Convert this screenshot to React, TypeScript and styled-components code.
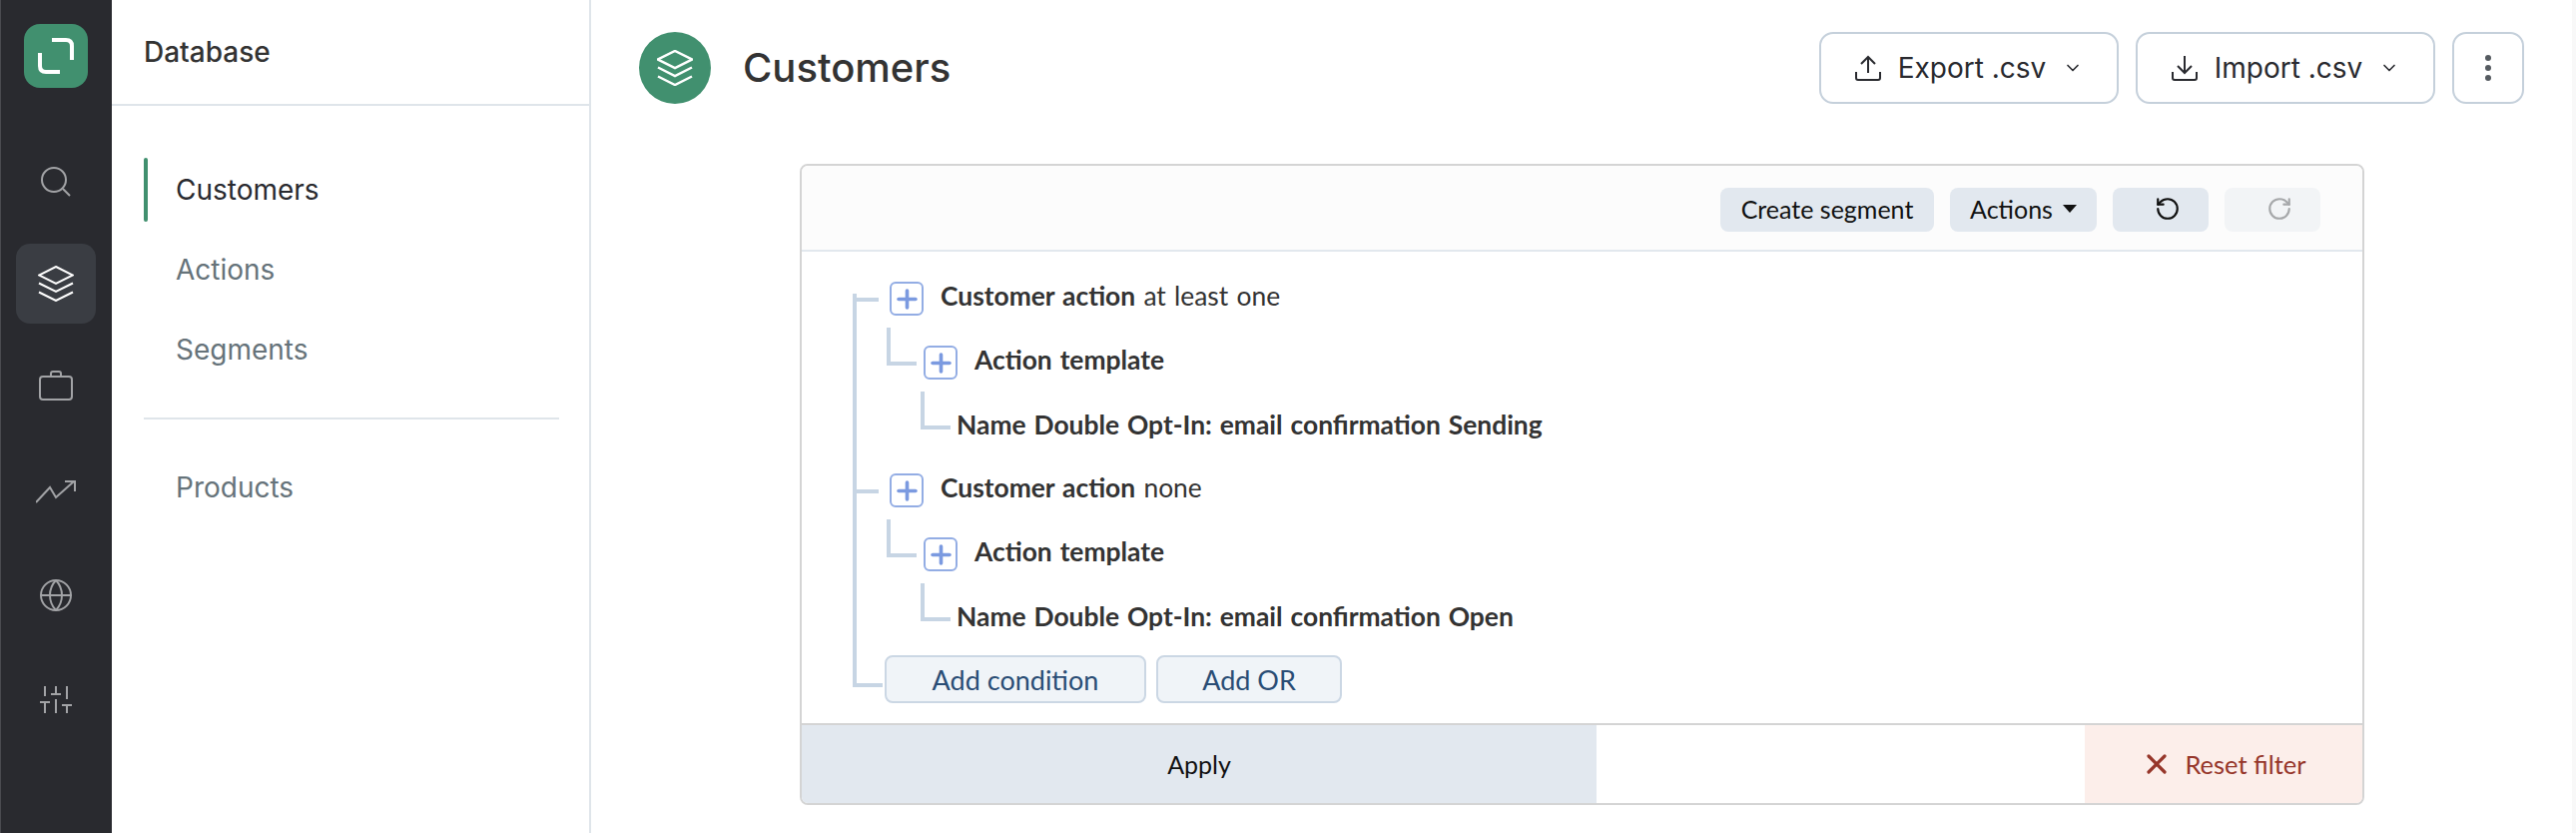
import styled, { createGlobalStyle } from 'styled-components';
import { ChevronDown, Globe, Plus, RotateCcw, RotateCw, X } from 'lucide-react';

const GlobalStyle = createGlobalStyle`
  html, body {
    margin: 0;
    padding: 0;
    background: #fff;
  }
  * {
    box-sizing: border-box;
  }
`;

const Page = styled.div`
  display: flex;
  width: 2580px;
  height: 834px;
  overflow: hidden;
  font-family: Inter, 'Liberation Sans', sans-serif;
  color: #333;
`;

const Rail = styled.aside`
  flex: 0 0 112px;
  display: flex;
  flex-direction: column;
  align-items: center;
  padding-top: 24px;
  background: #292a2f;
  box-shadow: inset 1px 0 0 #4a4b50;
`;

const Logo = styled.div`
  width: 64px;
  height: 64px;
  margin-bottom: 52px;
  border-radius: 16px;
  background: #41906f;
`;

const RailItem = styled.div<{ $active?: boolean }>`
  width: 80px;
  height: 80px;
  margin-bottom: 24px;
  display: flex;
  align-items: center;
  justify-content: center;
  border-radius: 14px;
  color: ${(p) => (p.$active ? '#fff' : '#a2a3a6')};
  background: ${(p) => (p.$active ? '#3a3d43' : 'transparent')};
`;

const SubNav = styled.nav`
  flex: 0 0 480px;
  border-right: 2px solid #dfe5ea;
`;

const SubNavHead = styled.div`
  height: 106px;
  padding: 0 32px;
  display: flex;
  align-items: center;
  font-size: 28px;
  font-weight: 500;
  color: #333;
  border-bottom: 2px solid #dfe5ea;
`;

const SubNavList = styled.div`
  padding: 44px 30px 0 32px;
  display: flex;
  flex-direction: column;
`;

const SubNavItem = styled.div<{ $active?: boolean }>`
  position: relative;
  height: 80px;
  padding-left: 32px;
  display: flex;
  align-items: center;
  font-size: 28px;
  color: ${(p) => (p.$active ? '#292a2f' : '#66737a')};
  ${(p) =>
    p.$active &&
    `&::before {
      content: '';
      position: absolute;
      left: 0;
      top: 8px;
      bottom: 8px;
      width: 4px;
      border-radius: 2px;
      background: #41906f;
    }`}
`;

const SubNavDivider = styled.div`
  height: 2px;
  margin: 28px 0;
  background: #dfe5ea;
`;

const Main = styled.main`
  flex: 1;
  min-width: 0;
  border-right: 4px solid #f8f8f8;
`;

const TopBar = styled.header`
  height: 164px;
  padding: 32px 48px 0 48px;
  display: flex;
  align-items: flex-start;
`;

const TitleIcon = styled.div`
  width: 72px;
  height: 72px;
  display: flex;
  align-items: center;
  justify-content: center;
  border-radius: 50%;
  color: #fff;
  background: #41906f;
`;

const Title = styled.h1`
  margin: 0 0 0 32px;
  flex: 1;
  line-height: 72px;
  font-size: 40px;
  font-weight: 500;
  color: #333;
`;

const TopButtons = styled.div`
  display: flex;
  gap: 17px;
`;

const TopButton = styled.div<{ $square?: boolean }>`
  height: 72px;
  width: ${(p) => (p.$square ? '72px' : '300px')};
  display: flex;
  align-items: center;
  justify-content: center;
  gap: 17px;
  font-size: 28px;
  color: #292a2f;
  background: #fff;
  border: 2px solid #c5d0db;
  border-radius: 14px;
`;

const MoreDots = styled.span`
  display: flex;
  flex-direction: column;
  gap: 4px;

  & > i {
    width: 6px;
    height: 6px;
    border-radius: 50%;
    background: #555b60;
  }
`;

const Panel = styled.section`
  width: 1567px;
  height: 642px;
  margin-left: 209px;
  display: flex;
  flex-direction: column;
  overflow: hidden;
  border: 2px solid #d4d4d4;
  border-radius: 8px;
  font-family: Lato, 'Noto Sans', sans-serif;
`;

const PanelHead = styled.div`
  height: 86px;
  padding: 22px 42px 0 0;
  display: flex;
  justify-content: flex-end;
  gap: 16px;
  background: #fcfcfc;
  border-bottom: 2px solid #e2e8ee;
`;

const HeadButton = styled.div<{ $width: number; $disabled?: boolean; $icon?: boolean }>`
  width: ${(p) => p.$width}px;
  height: 44px;
  padding: 0 0 2px ${(p) => (p.$icon ? '14px' : '0')};
  display: flex;
  align-items: center;
  justify-content: center;
  gap: 10px;
  font-size: 25px;
  color: ${(p) => (p.$disabled ? '#a6a8aa' : '#111')};
  background: ${(p) => (p.$disabled ? '#f2f4f6' : '#e2e8ef')};
  border-radius: 8px;
`;

const Caret = styled.span`
  width: 0;
  height: 0;
  border-left: 7px solid transparent;
  border-right: 7px solid transparent;
  border-top: 8px solid #111;
`;

const Tree = styled.div`
  flex: 1;
  padding-top: 15px;
  display: flex;
  flex-direction: column;
`;

const Spine = styled.div`
  position: relative;

  &::before {
    content: '';
    position: absolute;
    left: 51px;
    top: 27px;
    bottom: 22px;
    border-left: 4px solid #c7d5e4;
  }
`;

const Row = styled.div<{ $level: number }>`
  position: relative;
  height: 64px;
  margin-left: ${(p) => 51 + p.$level * 34}px;
  padding-left: 37px;
  display: flex;
  align-items: center;
  font-size: 26.4px;
  word-spacing: 1.5px;
  color: #333;

  &::before {
    content: '';
    position: absolute;
    left: 0;
    top: ${(p) => (p.$level === 0 ? '27px' : '-3px')};
    width: 26px;
    height: ${(p) => (p.$level === 0 ? '4px' : '34px')};
    border-left: ${(p) => (p.$level === 0 ? '0' : '4px solid #c7d5e4')};
    border-bottom: 4px solid #c7d5e4;
  }
`;

const AddBox = styled.span`
  flex: 0 0 34px;
  width: 34px;
  height: 34px;
  margin-right: 17px;
  display: flex;
  align-items: center;
  justify-content: center;
  color: #7b9ae0;
  border: 2px solid #93ade4;
  border-radius: 6px;
`;

const RowText = styled.span`
  margin-bottom: 6px;
`;

const Strong = styled.b`
  font-weight: 700;
`;

const LeafText = styled.span`
  margin: 0 0 4px -1px;
  font-weight: 700;
`;

const AddRow = styled.div`
  position: relative;
  margin: 5px 0 0 51px;
  padding-left: 32px;
  display: flex;
  gap: 10px;

  &::before {
    content: '';
    position: absolute;
    left: 0;
    top: 0;
    width: 26px;
    height: 28px;
    border-left: 4px solid #c7d5e4;
    border-bottom: 4px solid #c7d5e4;
  }
`;

const AddButton = styled.div<{ $width: number }>`
  width: ${(p) => p.$width}px;
  height: 48px;
  display: flex;
  align-items: center;
  justify-content: center;
  font-size: 27px;
  color: #2a4d75;
  background: #f0f4f8;
  border: 2px solid #cbd7e4;
  border-radius: 8px;
`;

const PanelFoot = styled.div`
  height: 80px;
  display: flex;
  justify-content: space-between;
  border-top: 2px solid #d4d4d4;
`;

const ApplyButton = styled.div`
  width: 796px;
  display: flex;
  align-items: center;
  justify-content: center;
  font-size: 25px;
  color: #111;
  background: #e2e8ef;
`;

const ResetButton = styled.div`
  width: 278px;
  display: flex;
  align-items: center;
  justify-content: center;
  gap: 12px;
  font-size: 25.5px;
  color: #96362a;
  background: #fceeea;
`;

const SearchSvg = styled.svg`
  margin-top: 4px;
`;

const BriefcaseSvg = styled.svg`
  margin-bottom: 4px;
`;

function LayersIcon({ strokeWidth = 2 }: { strokeWidth?: number }) {
  return (
    <svg width="36" height="36" viewBox="0 0 36 36" fill="none" stroke="currentColor" strokeWidth={strokeWidth}>
      <path d="M18 1 35 9.5 18 18 1 9.5Z" />
      <path d="M1 17.5 18 26 35 17.5" />
      <path d="M1 26.5 18 35 35 26.5" />
    </svg>
  );
}

function LogoMark() {
  return (
    <svg width="64" height="64" viewBox="0 0 64 64" fill="none" stroke="#fff" strokeWidth="4">
      <path d="M28 16H42Q48 16 48 22V36" />
      <path d="M16 29V42Q16 48 22 48H36" />
    </svg>
  );
}

function SearchIcon() {
  return (
    <SearchSvg width="30" height="30" viewBox="0 0 30 30" fill="none" stroke="currentColor" strokeWidth="2">
      <circle cx="13" cy="13" r="12" />
      <path d="M22 22 29 29" />
    </SearchSvg>
  );
}

function BriefcaseIcon() {
  return (
    <BriefcaseSvg width="34" height="30" viewBox="0 0 34 30" fill="none" stroke="currentColor" strokeWidth="2">
      <rect x="1" y="6" width="32" height="23" rx="3" />
      <path d="M12 6V3Q12 1 14 1H20Q22 1 22 3V6" />
    </BriefcaseSvg>
  );
}

function TrendIcon() {
  return (
    <svg width="40" height="24" viewBox="0 0 40 24" fill="none" stroke="currentColor" strokeWidth="2">
      <path d="M0 23 14 8 20 18 38 2" />
      <path d="M29 2H39V12" />
    </svg>
  );
}

function SlidersIcon() {
  return (
    <svg width="33" height="27" viewBox="0 0 33 27" fill="none" stroke="currentColor" strokeWidth="2">
      <path d="M5 0V10M16 0V8M11 8H21M27 0V13" />
      <path d="M0 16H10M5 16V27M16 13V27M22 19H32M27 19V27" />
    </svg>
  );
}

function UploadIcon() {
  return (
    <svg width="26" height="26" viewBox="0 0 26 26" fill="none" stroke="currentColor" strokeWidth="2">
      <path d="M13 18V2M6 9 13 2 20 9" />
      <path d="M1 17V23Q1 25 3 25H23Q25 25 25 23V17" />
    </svg>
  );
}

function DownloadIcon() {
  return (
    <svg width="26" height="26" viewBox="0 0 26 26" fill="none" stroke="currentColor" strokeWidth="2">
      <path d="M13 1V18M6 11 13 18 20 11" />
      <path d="M1 17V23Q1 25 3 25H23Q25 25 25 23V17" />
    </svg>
  );
}

function PlusBox() {
  return (
    <AddBox>
      <Plus size={29} strokeWidth={3} />
    </AddBox>
  );
}

export default function App() {
  return (
    <Page>
      <GlobalStyle />
      <Rail>
        <Logo>
          <LogoMark />
        </Logo>
        <RailItem>
          <SearchIcon />
        </RailItem>
        <RailItem $active>
          <LayersIcon />
        </RailItem>
        <RailItem>
          <BriefcaseIcon />
        </RailItem>
        <RailItem>
          <TrendIcon />
        </RailItem>
        <RailItem>
          <Globe size={36} strokeWidth={1.3} />
        </RailItem>
        <RailItem>
          <SlidersIcon />
        </RailItem>
      </Rail>

      <SubNav>
        <SubNavHead>Database</SubNavHead>
        <SubNavList>
          <SubNavItem $active>Customers</SubNavItem>
          <SubNavItem>Actions</SubNavItem>
          <SubNavItem>Segments</SubNavItem>
          <SubNavDivider />
          <SubNavItem>Products</SubNavItem>
        </SubNavList>
      </SubNav>

      <Main>
        <TopBar>
          <TitleIcon>
            <LayersIcon strokeWidth={2.5} />
          </TitleIcon>
          <Title>Customers</Title>
          <TopButtons>
            <TopButton>
              <UploadIcon />
              Export .csv
              <ChevronDown size={20} strokeWidth={2} />
            </TopButton>
            <TopButton>
              <DownloadIcon />
              Import .csv
              <ChevronDown size={20} strokeWidth={2} />
            </TopButton>
            <TopButton $square>
              <MoreDots>
                <i />
                <i />
                <i />
              </MoreDots>
            </TopButton>
          </TopButtons>
        </TopBar>

        <Panel>
          <PanelHead>
            <HeadButton $width={214}>Create segment</HeadButton>
            <HeadButton $width={147}>
              Actions
              <Caret />
            </HeadButton>
            <HeadButton $width={96} $icon>
              <RotateCcw size={26} strokeWidth={2} />
            </HeadButton>
            <HeadButton $width={96} $disabled $icon>
              <RotateCw size={26} strokeWidth={2} />
            </HeadButton>
          </PanelHead>

          <Tree>
            <Spine>
              <Row $level={0}>
                <PlusBox />
                <RowText>
                  <Strong>Customer action</Strong> at least one
                </RowText>
              </Row>
              <Row $level={1}>
                <PlusBox />
                <RowText>
                  <Strong>Action template</Strong>
                </RowText>
              </Row>
              <Row $level={2}>
                <LeafText>Name Double Opt-In: email confirmation Sending</LeafText>
              </Row>
              <Row $level={0}>
                <PlusBox />
                <RowText>
                  <Strong>Customer action</Strong> none
                </RowText>
              </Row>
              <Row $level={1}>
                <PlusBox />
                <RowText>
                  <Strong>Action template</Strong>
                </RowText>
              </Row>
              <Row $level={2}>
                <LeafText>Name Double Opt-In: email confirmation Open</LeafText>
              </Row>
              <AddRow>
                <AddButton $width={262}>Add condition</AddButton>
                <AddButton $width={186}>Add OR</AddButton>
              </AddRow>
            </Spine>
          </Tree>

          <PanelFoot>
            <ApplyButton>Apply</ApplyButton>
            <ResetButton>
              <X size={32} strokeWidth={2.4} />
              Reset filter
            </ResetButton>
          </PanelFoot>
        </Panel>
      </Main>
    </Page>
  );
}
